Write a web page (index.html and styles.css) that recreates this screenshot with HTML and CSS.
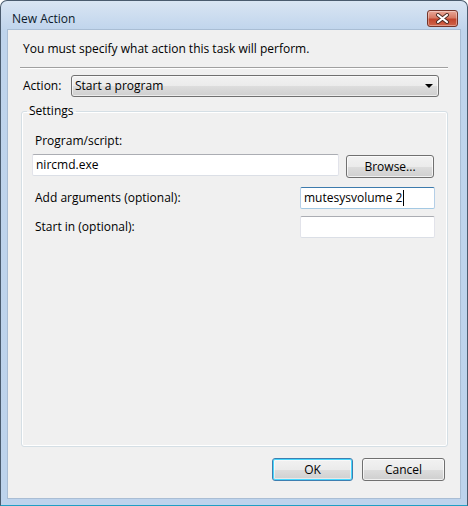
FILE: index.html
```html
<!DOCTYPE html>
<html lang="en">
<head>
  <meta charset="UTF-8">
  <title>New Action</title>
  <link rel="stylesheet" href="styles.css">
</head>
<body>
  <div class="window">
    <div class="titlebar">
      <span class="title">New Action</span>
      <div class="close-btn">
        <svg width="15" height="11" viewBox="0 0 15 11">
          <path d="M3 2 L12 9 M12 2 L3 9" stroke="#4b2a22" stroke-width="4" stroke-linecap="round"/>
          <path d="M3 2 L12 9 M12 2 L3 9" stroke="#ffffff" stroke-width="2.2" stroke-linecap="round"/>
        </svg>
      </div>
    </div>

    <div class="client">
      <p class="intro">You must specify what action this task will perform.</p>
      <div class="separator"></div>

      <div class="action-row">
        <span class="action-label">Action:</span>
        <div class="combo">
          <span>Start a program</span>
          <span class="combo-arrow"></span>
        </div>
      </div>

      <fieldset class="settings">
        <legend>Settings</legend>
        <div class="settings-body">
          <div class="field-label">Program/script:</div>
          <div class="program-row">
            <div class="textbox program-box">nircmd.exe</div>
            <div class="btn browse-btn">Browse...</div>
          </div>
          <div class="option-row args-row">
            <span class="field-label">Add arguments (optional):</span>
            <div class="textbox small-box focused">mutesysvolume 2<span class="caret"></span></div>
          </div>
          <div class="option-row start-row">
            <span class="field-label">Start in (optional):</span>
            <div class="textbox small-box"></div>
          </div>
        </div>
      </fieldset>

      <div class="button-row">
        <div class="btn ok-btn">OK</div>
        <div class="btn cancel-btn">Cancel</div>
      </div>
    </div>
  </div>
</body>
</html>
```

FILE: styles.css
```css
* {
  box-sizing: border-box;
  margin: 0;
  padding: 0;
}

body {
  font-family: "Open Sans", "Noto Sans", sans-serif;
  font-size: 12px;
  line-height: 16px;
  color: #000;
  background: #fff;
}

.window {
  width: 468px;
  height: 506px;
  display: flex;
  flex-direction: column;
  border: 1px solid #4a5b6e;
  border-bottom-color: #1f9fc4;
  border-radius: 7px 7px 0 0;
  padding: 0 7px 7px 7px;
  background: linear-gradient(to bottom, #d9e5f3 0, #bfd4ec 30px, #bdd3ec 100%);
}

.titlebar {
  height: 29px;
  display: flex;
  align-items: center;
  justify-content: space-between;
}

.title {
  margin-left: 4px;
  margin-top: 7px;
  color: #0c1a2b;
}

.close-btn {
  width: 31px;
  height: 17px;
  margin-top: 6px;
  margin-right: 2px;
  border: 1px solid #74352a;
  border-radius: 3px;
  background: linear-gradient(to bottom, #e9a898 0, #d77a64 45%, #c2452c 55%, #d0654a 100%);
  display: flex;
  align-items: center;
  justify-content: center;
  box-shadow: inset 0 0 0 1px rgba(255, 255, 255, 0.35);
}

.client {
  flex: 1;
  display: flex;
  flex-direction: column;
  background: #f0f0f0;
  box-shadow: 0 0 0 1px #a9bdd4;
}

.intro {
  padding: 11px 0 0 15px;
}

/* etched divider under the intro text */
.separator {
  margin: 10px 12px 0;
  height: 2px;
  border-top: 1px solid #a0a0a0;
  border-bottom: 1px solid #ffffff;
}

.action-row {
  display: flex;
  align-items: center;
  margin-top: 6px;
  padding: 0 21px 0 15px;
}

.action-label {
  width: 48px;
}

.combo {
  flex: 1;
  height: 22px;
  display: flex;
  align-items: center;
  justify-content: space-between;
  padding: 0 5px 0 3px;
  border: 1px solid #707070;
  border-radius: 3px;
  background: linear-gradient(to bottom, #f2f2f2 0, #ebebeb 50%, #dddddd 51%, #cfcfcf 100%);
  box-shadow: inset 0 0 0 1px rgba(255, 255, 255, 0.6);
}

.combo-arrow {
  width: 0;
  height: 0;
  border-left: 4px solid transparent;
  border-right: 4px solid transparent;
  border-top: 4px solid #000;
}

.settings {
  flex: 1;
  min-height: 0;
  margin: 6px 12px 0 13px;
  padding: 0;
  border: 1px solid #d5dfe5;
  border-radius: 3px;
  box-shadow: inset 0 0 0 1px #fff;
}

.settings legend {
  margin-left: 5px;
  padding: 0 2px;
}

.settings-body {
  padding: 14px 0 0 10px;
}

.field-label {
  padding-left: 3px;
}

.program-row {
  display: flex;
  gap: 7px;
  margin-top: 5px;
}

.textbox {
  height: 22px;
  padding: 0 3px;
  display: flex;
  align-items: center;
  background: #fff;
  border: 1px solid #dbdfe6;
  border-top-color: #abadb3;
  border-left-color: #e2e3ea;
  border-right-color: #e2e3ea;
  border-radius: 2px;
}

.textbox.focused {
  border-color: #a4c9e3;
  border-top-color: #3d7bad;
  border-left-color: #b5cfe7;
  border-right-color: #b5cfe7;
}

.caret {
  width: 1px;
  height: 16px;
  margin-left: 1px;
  background: #000;
}

.program-box {
  width: 307px;
}

.option-row {
  display: flex;
  align-items: center;
  justify-content: space-between;
  width: 403px;
}

.args-row {
  margin-top: 9px;
}

.start-row {
  margin-top: 7px;
}

.small-box {
  width: 135px;
}

.btn {
  height: 23px;
  display: flex;
  align-items: center;
  justify-content: center;
  border: 1px solid #707070;
  border-radius: 3px;
  background: linear-gradient(to bottom, #f2f2f2 0, #ebebeb 50%, #dddddd 51%, #cfcfcf 100%);
  box-shadow: inset 0 0 0 1px rgba(255, 255, 255, 0.7);
}

.browse-btn {
  width: 88px;
  margin-top: 1px;
}

.button-row {
  display: flex;
  justify-content: flex-end;
  gap: 9px;
  margin-top: 11px;
  padding: 0 15px 17px 0;
}

.ok-btn {
  width: 81px;
  border-color: #3c7fb1;
  box-shadow: inset 0 0 0 1px #48d7fd, inset 0 0 0 2px rgba(255, 255, 255, 0.5);
}

.cancel-btn {
  width: 83px;
}
```
